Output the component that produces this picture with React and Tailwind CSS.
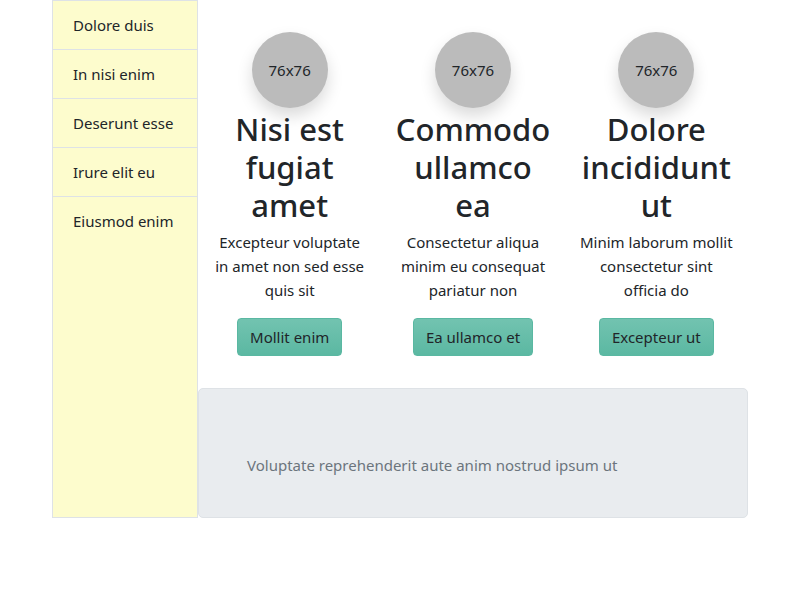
import React from "react";

const NAV_ITEMS = [
  "Dolore duis",
  "In nisi enim",
  "Deserunt esse",
  "Irure elit eu",
  "Eiusmod enim",
];

const FEATURES = [
  {
    title: "Nisi est fugiat amet",
    text: "Excepteur voluptate in amet non sed esse quis sit",
    button: "Mollit enim",
  },
  {
    title: "Commodo ullamco ea",
    text: "Consectetur aliqua minim eu consequat pariatur non",
    button: "Ea ullamco et",
  },
  {
    title: "Dolore incididunt ut",
    text: "Minim laborum mollit consectetur sint officia do",
    button: "Excepteur ut",
  },
];

const FeatureCard = ({ title, text, button }) => (
  <div className="flex flex-col items-center text-center px-[15px]">
    <div className="mt-8 w-[76px] h-[76px] rounded-full bg-[#bbbbbb] flex items-center justify-center text-[15px] text-[#212529] shadow-[0_8px_16px_rgba(0,0,0,0.15)]">
      76x76
    </div>
    <h2 className="mt-[2px] mb-[6px] text-[31px] leading-[38px] font-medium text-[#212529]">
      {title}
    </h2>
    <p className="text-[15px] leading-6 text-[#212529]">{text}</p>
    <button
      type="button"
      className="mt-4 h-[38px] px-3 rounded-[4px] border border-[#5ab8a2] bg-gradient-to-b from-[#72c3b0] to-[#5bb8a2] text-[15px] text-[#212529]"
    >
      {button}
    </button>
  </div>
);

export default function App() {
  return (
    <div className="w-full h-[600px] bg-white font-['Noto_Sans',sans-serif]">
      <div className="w-[696px] mx-auto flex">
        {/* Sidebar */}
        <aside className="w-[146px] shrink-0 border border-[#dee2e6] bg-[#fdfccd]">
          {NAV_ITEMS.map((item, i) => (
            <div
              key={item}
              className={`h-[49px] flex items-center px-5 text-[15px] text-[#212529] ${
                i < NAV_ITEMS.length - 1 ? "border-b border-[#dee2e6]" : ""
              }`}
            >
              {item}
            </div>
          ))}
        </aside>

        {/* Main */}
        <main className="flex-1 flex flex-col">
          <div className="grid grid-cols-3">
            {FEATURES.map((f) => (
              <FeatureCard key={f.button} {...f} />
            ))}
          </div>
          <div className="mt-8 border border-[#dee2e6] rounded-[5px] bg-[#e9ecef] pt-16 pb-10 px-12 text-[15px] leading-6 text-[#6c757d]">
            Voluptate reprehenderit aute anim nostrud ipsum ut
          </div>
        </main>
      </div>
    </div>
  );
}
